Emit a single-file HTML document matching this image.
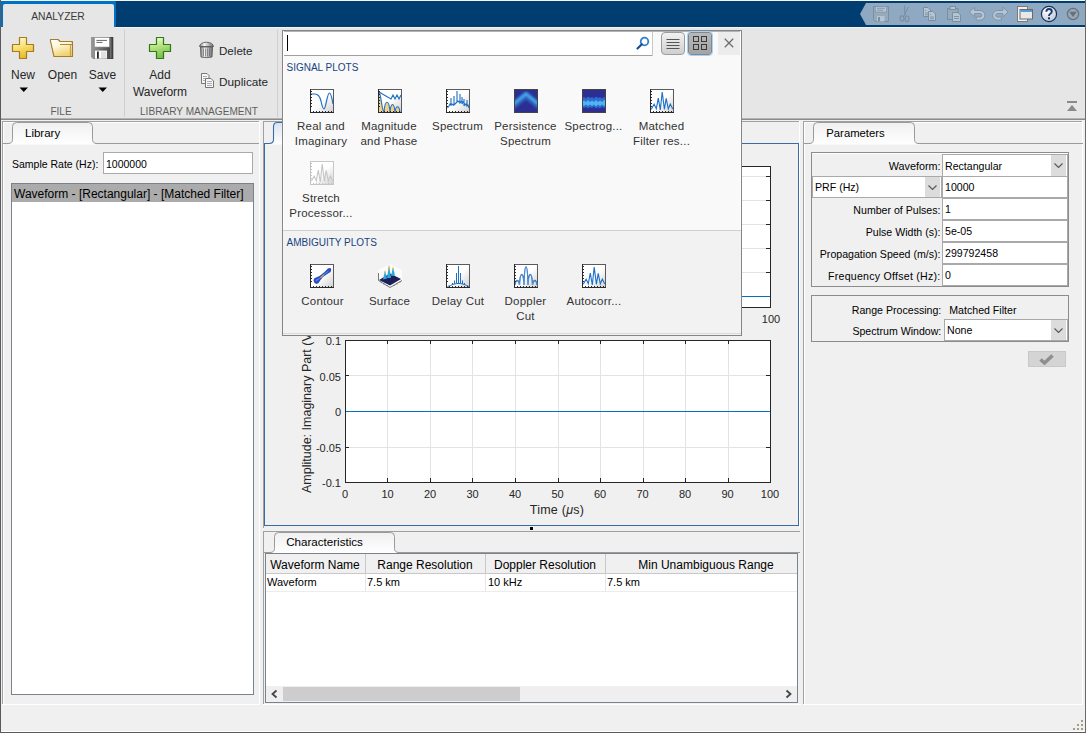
<!DOCTYPE html><html><head><meta charset="utf-8"><style>
html,body{margin:0;padding:0;width:1086px;height:733px;overflow:hidden;background:#f0f0f0;position:relative;font-family:"Liberation Sans", sans-serif}
.t{position:absolute;white-space:nowrap;line-height:1}
svg{overflow:visible}
</style></head><body>
<div style="position:absolute;left:0px;top:0px;width:1086px;height:1px;background:#f4f4f4"></div>
<div style="position:absolute;left:1px;top:1px;width:1085px;height:26px;background:#003e72"></div>
<div style="position:absolute;left:1px;top:1px;width:115px;height:26px;background:#0072c6"></div>
<div style="position:absolute;left:3px;top:4px;width:111px;height:23px;background:#e6e6e6;border-radius:2px 2px 0 0"></div>
<div class="t" style="left:-142px;width:400px;text-align:center;top:12.28px;font-size:10.3px;color:#3a3a3a;">ANALYZER</div>
<svg style="position:absolute;left:860px;top:3px" width="226" height="22" viewBox="0 0 226 22"><path d="M0 11 L6 0 H226 V22 H6 Z" fill="#8fa9c2"/></svg>
<div style="position:absolute;left:1px;top:27px;width:1084px;height:91px;background:#e6e6e6"></div>
<div style="position:absolute;left:0px;top:118px;width:1086px;height:1px;background:#b4b4b4"></div>
<div style="position:absolute;left:0px;top:119px;width:1086px;height:1px;background:#8a8a8a"></div>
<div style="position:absolute;left:124px;top:30px;width:1px;height:87px;background:#cfcfcf"></div>
<div style="position:absolute;left:277px;top:30px;width:1px;height:87px;background:#cfcfcf"></div>
<div class="t" style="left:-177px;width:400px;text-align:center;top:69.44px;font-size:12px;color:#262626;">New</div>
<div class="t" style="left:-137.5px;width:400px;text-align:center;top:69.44px;font-size:12px;color:#262626;">Open</div>
<div class="t" style="left:-97.5px;width:400px;text-align:center;top:69.44px;font-size:12px;color:#262626;">Save</div>
<div class="t" style="left:-139px;width:400px;text-align:center;top:107.03px;font-size:10px;color:#5e5e5e;">FILE</div>
<div class="t" style="left:-40px;width:400px;text-align:center;top:69.44px;font-size:12px;color:#262626;">Add</div>
<div class="t" style="left:-40px;width:400px;text-align:center;top:85.64px;font-size:12px;color:#262626;">Waveform</div>
<div class="t" style="left:219px;top:44.88px;font-size:11.6px;color:#262626;">Delete</div>
<div class="t" style="left:219px;top:77.01px;font-size:11.8px;color:#262626;">Duplicate</div>
<div class="t" style="left:-1px;width:400px;text-align:center;top:106.95px;font-size:10.1px;color:#5e5e5e;">LIBRARY MANAGEMENT</div>
<svg style="position:absolute;left:19px;top:87px" width="10" height="6" viewBox="0 0 10 6"><path d="M0.5 0.5 H9 L4.75 5 Z" fill="#000"/></svg>
<svg style="position:absolute;left:98px;top:87px" width="10" height="6" viewBox="0 0 10 6"><path d="M0.5 0.5 H9 L4.75 5 Z" fill="#000"/></svg>
<div style="position:absolute;left:1067px;top:101px;width:10px;height:2px;background:#8a8a8a"></div>
<svg style="position:absolute;left:1067px;top:105px" width="10" height="6" viewBox="0 0 10 6"><path d="M0 6 L5 0 L10 6 Z" fill="#8a8a8a"/></svg>
<div style="position:absolute;left:1px;top:120px;width:1084px;height:612px;background:#f0f0f0"></div>
<div style="position:absolute;left:0px;top:0px;width:1px;height:733px;background:#5a5a5a"></div>
<div style="position:absolute;left:1085px;top:0px;width:1px;height:733px;background:#6a6a6a"></div>
<div style="position:absolute;left:0px;top:732px;width:1086px;height:1px;background:#5a5a5a"></div>
<div style="position:absolute;left:2px;top:121px;width:257px;height:1px;background:#a0a0a0"></div>
<div style="position:absolute;left:2px;top:121px;width:1px;height:583px;background:#a0a0a0"></div>
<div style="position:absolute;left:3px;top:122px;width:256px;height:1px;background:#ffffff"></div>
<div style="position:absolute;left:3px;top:122px;width:1px;height:582px;background:#ffffff"></div>
<div style="position:absolute;left:2px;top:704px;width:258px;height:1px;background:#ffffff"></div>
<div style="position:absolute;left:259px;top:121px;width:1px;height:584px;background:#ffffff"></div>
<div style="position:absolute;left:3px;top:143px;width:256px;height:1px;background:#9a9a9a"></div>
<svg style="position:absolute;left:8px;top:122px" width="89" height="22" viewBox="0 0 89 22"><defs><linearGradient id="tl" x1="0" y1="0" x2="0" y2="1"><stop offset="0" stop-color="#f0f0f0"/><stop offset="1" stop-color="#ffffff"/></linearGradient></defs><path d="M0 21.5 Q4.5 21.5 4.5 17.5 V4.5 Q4.5 0.5 8.5 0.5 H80.5 Q84.5 0.5 84.5 4.5 V17.5 Q84.5 21.5 89 21.5 V22.5 H0 Z" fill="url(#tl)" stroke="none"/><path d="M0 21.5 Q4.5 21.5 4.5 17.5 V4.5 Q4.5 0.5 8.5 0.5 H80.5 Q84.5 0.5 84.5 4.5 V17.5 Q84.5 21.5 89 21.5" fill="none" stroke="#9a9a9a" stroke-width="1"/></svg>
<div class="t" style="left:25px;top:128.27px;font-size:11.5px;color:#000;">Library</div>
<div class="t" style="left:12px;top:159.11px;font-size:10.5px;color:#000;">Sample Rate (Hz):</div>
<div style="position:absolute;left:103px;top:152px;width:150px;height:22px;background:#fff;box-sizing:border-box;border:1px solid #a9a9a9"></div>
<div class="t" style="left:106px;top:159.11px;font-size:10.5px;color:#000;">1000000</div>
<div style="position:absolute;left:11px;top:183px;width:243px;height:512px;background:#fff;box-sizing:border-box;border:1px solid #7a828c"></div>
<div style="position:absolute;left:12px;top:184px;width:241px;height:18px;background:#ababab"></div>
<div class="t" style="left:14px;top:187.64px;font-size:12px;color:#000;">Waveform - [Rectangular] - [Matched Filter]</div>
<div style="position:absolute;left:263px;top:121px;width:537px;height:1px;background:#a0a0a0"></div>
<div style="position:absolute;left:263px;top:121px;width:1px;height:407px;background:#a0a0a0"></div>
<div style="position:absolute;left:799px;top:121px;width:1px;height:407px;background:#ffffff"></div>
<div style="position:absolute;left:264px;top:143px;width:535px;height:383px;box-sizing:border-box;border:1px solid #3a6ba5"></div>
<svg style="position:absolute;left:269px;top:122px" width="116" height="22" viewBox="0 0 116 22"><defs><linearGradient id="tc" x1="0" y1="0" x2="0" y2="1"><stop offset="0" stop-color="#d9e3ee"/><stop offset="1" stop-color="#ffffff"/></linearGradient></defs><path d="M0 21.5 Q4.5 21.5 4.5 17.5 V4.5 Q4.5 0.5 8.5 0.5 H107.5 Q111.5 0.5 111.5 4.5 V17.5 Q111.5 21.5 116 21.5 V22.5 H0 Z" fill="url(#tc)" stroke="none"/><path d="M0 21.5 Q4.5 21.5 4.5 17.5 V4.5 Q4.5 0.5 8.5 0.5 H107.5 Q111.5 0.5 111.5 4.5 V17.5 Q111.5 21.5 116 21.5" fill="none" stroke="#3a6ba5" stroke-width="1.1"/></svg>
<div style="position:absolute;left:345px;top:166px;width:426px;height:142px;background:#fff"></div>
<svg style="position:absolute;left:345px;top:166px" width="426" height="142" viewBox="0 0 426 142"><line x1="42.5" y1="0" x2="42.5" y2="141" stroke="#e3e3e3" stroke-width="1"/><line x1="42.5" y1="141" x2="42.5" y2="137" stroke="#262626" stroke-width="1"/><line x1="42.5" y1="0" x2="42.5" y2="4" stroke="#262626" stroke-width="1"/><line x1="85.5" y1="0" x2="85.5" y2="141" stroke="#e3e3e3" stroke-width="1"/><line x1="85.5" y1="141" x2="85.5" y2="137" stroke="#262626" stroke-width="1"/><line x1="85.5" y1="0" x2="85.5" y2="4" stroke="#262626" stroke-width="1"/><line x1="127.5" y1="0" x2="127.5" y2="141" stroke="#e3e3e3" stroke-width="1"/><line x1="127.5" y1="141" x2="127.5" y2="137" stroke="#262626" stroke-width="1"/><line x1="127.5" y1="0" x2="127.5" y2="4" stroke="#262626" stroke-width="1"/><line x1="170.5" y1="0" x2="170.5" y2="141" stroke="#e3e3e3" stroke-width="1"/><line x1="170.5" y1="141" x2="170.5" y2="137" stroke="#262626" stroke-width="1"/><line x1="170.5" y1="0" x2="170.5" y2="4" stroke="#262626" stroke-width="1"/><line x1="213.5" y1="0" x2="213.5" y2="141" stroke="#e3e3e3" stroke-width="1"/><line x1="213.5" y1="141" x2="213.5" y2="137" stroke="#262626" stroke-width="1"/><line x1="213.5" y1="0" x2="213.5" y2="4" stroke="#262626" stroke-width="1"/><line x1="255.5" y1="0" x2="255.5" y2="141" stroke="#e3e3e3" stroke-width="1"/><line x1="255.5" y1="141" x2="255.5" y2="137" stroke="#262626" stroke-width="1"/><line x1="255.5" y1="0" x2="255.5" y2="4" stroke="#262626" stroke-width="1"/><line x1="298.5" y1="0" x2="298.5" y2="141" stroke="#e3e3e3" stroke-width="1"/><line x1="298.5" y1="141" x2="298.5" y2="137" stroke="#262626" stroke-width="1"/><line x1="298.5" y1="0" x2="298.5" y2="4" stroke="#262626" stroke-width="1"/><line x1="340.5" y1="0" x2="340.5" y2="141" stroke="#e3e3e3" stroke-width="1"/><line x1="340.5" y1="141" x2="340.5" y2="137" stroke="#262626" stroke-width="1"/><line x1="340.5" y1="0" x2="340.5" y2="4" stroke="#262626" stroke-width="1"/><line x1="383.5" y1="0" x2="383.5" y2="141" stroke="#e3e3e3" stroke-width="1"/><line x1="383.5" y1="141" x2="383.5" y2="137" stroke="#262626" stroke-width="1"/><line x1="383.5" y1="0" x2="383.5" y2="4" stroke="#262626" stroke-width="1"/><line x1="0" y1="10.5" x2="425" y2="10.5" stroke="#e3e3e3" stroke-width="1"/><line x1="0" y1="10.5" x2="4" y2="10.5" stroke="#262626" stroke-width="1"/><line x1="425" y1="10.5" x2="421" y2="10.5" stroke="#262626" stroke-width="1"/><line x1="0" y1="34.5" x2="425" y2="34.5" stroke="#e3e3e3" stroke-width="1"/><line x1="0" y1="34.5" x2="4" y2="34.5" stroke="#262626" stroke-width="1"/><line x1="425" y1="34.5" x2="421" y2="34.5" stroke="#262626" stroke-width="1"/><line x1="0" y1="58.5" x2="425" y2="58.5" stroke="#e3e3e3" stroke-width="1"/><line x1="0" y1="58.5" x2="4" y2="58.5" stroke="#262626" stroke-width="1"/><line x1="425" y1="58.5" x2="421" y2="58.5" stroke="#262626" stroke-width="1"/><line x1="0" y1="82.5" x2="425" y2="82.5" stroke="#e3e3e3" stroke-width="1"/><line x1="0" y1="82.5" x2="4" y2="82.5" stroke="#262626" stroke-width="1"/><line x1="425" y1="82.5" x2="421" y2="82.5" stroke="#262626" stroke-width="1"/><line x1="0" y1="106.5" x2="425" y2="106.5" stroke="#e3e3e3" stroke-width="1"/><line x1="0" y1="106.5" x2="4" y2="106.5" stroke="#262626" stroke-width="1"/><line x1="425" y1="106.5" x2="421" y2="106.5" stroke="#262626" stroke-width="1"/><line x1="0" y1="130.5" x2="425" y2="130.5" stroke="#e3e3e3" stroke-width="1"/><line x1="0" y1="130.5" x2="4" y2="130.5" stroke="#262626" stroke-width="1"/><line x1="425" y1="130.5" x2="421" y2="130.5" stroke="#262626" stroke-width="1"/><line x1="0" y1="130.5" x2="425" y2="130.5" stroke="#0072bd" stroke-width="1.2"/><rect x="0.5" y="0.5" width="425" height="141" fill="none" stroke="#262626" stroke-width="1"/></svg>
<div class="t" style="left:571px;width:400px;text-align:center;top:313.89px;font-size:11px;color:#262626;">100</div>
<div style="position:absolute;left:345px;top:340px;width:426px;height:143px;background:#fff"></div>
<svg style="position:absolute;left:345px;top:340px" width="426" height="143" viewBox="0 0 426 143"><line x1="42.5" y1="0" x2="42.5" y2="142" stroke="#e3e3e3" stroke-width="1"/><line x1="42.5" y1="142" x2="42.5" y2="138" stroke="#262626" stroke-width="1"/><line x1="42.5" y1="0" x2="42.5" y2="4" stroke="#262626" stroke-width="1"/><line x1="85.5" y1="0" x2="85.5" y2="142" stroke="#e3e3e3" stroke-width="1"/><line x1="85.5" y1="142" x2="85.5" y2="138" stroke="#262626" stroke-width="1"/><line x1="85.5" y1="0" x2="85.5" y2="4" stroke="#262626" stroke-width="1"/><line x1="127.5" y1="0" x2="127.5" y2="142" stroke="#e3e3e3" stroke-width="1"/><line x1="127.5" y1="142" x2="127.5" y2="138" stroke="#262626" stroke-width="1"/><line x1="127.5" y1="0" x2="127.5" y2="4" stroke="#262626" stroke-width="1"/><line x1="170.5" y1="0" x2="170.5" y2="142" stroke="#e3e3e3" stroke-width="1"/><line x1="170.5" y1="142" x2="170.5" y2="138" stroke="#262626" stroke-width="1"/><line x1="170.5" y1="0" x2="170.5" y2="4" stroke="#262626" stroke-width="1"/><line x1="213.5" y1="0" x2="213.5" y2="142" stroke="#e3e3e3" stroke-width="1"/><line x1="213.5" y1="142" x2="213.5" y2="138" stroke="#262626" stroke-width="1"/><line x1="213.5" y1="0" x2="213.5" y2="4" stroke="#262626" stroke-width="1"/><line x1="255.5" y1="0" x2="255.5" y2="142" stroke="#e3e3e3" stroke-width="1"/><line x1="255.5" y1="142" x2="255.5" y2="138" stroke="#262626" stroke-width="1"/><line x1="255.5" y1="0" x2="255.5" y2="4" stroke="#262626" stroke-width="1"/><line x1="298.5" y1="0" x2="298.5" y2="142" stroke="#e3e3e3" stroke-width="1"/><line x1="298.5" y1="142" x2="298.5" y2="138" stroke="#262626" stroke-width="1"/><line x1="298.5" y1="0" x2="298.5" y2="4" stroke="#262626" stroke-width="1"/><line x1="340.5" y1="0" x2="340.5" y2="142" stroke="#e3e3e3" stroke-width="1"/><line x1="340.5" y1="142" x2="340.5" y2="138" stroke="#262626" stroke-width="1"/><line x1="340.5" y1="0" x2="340.5" y2="4" stroke="#262626" stroke-width="1"/><line x1="383.5" y1="0" x2="383.5" y2="142" stroke="#e3e3e3" stroke-width="1"/><line x1="383.5" y1="142" x2="383.5" y2="138" stroke="#262626" stroke-width="1"/><line x1="383.5" y1="0" x2="383.5" y2="4" stroke="#262626" stroke-width="1"/><line x1="0" y1="35.5" x2="425" y2="35.5" stroke="#e3e3e3" stroke-width="1"/><line x1="0" y1="35.5" x2="4" y2="35.5" stroke="#262626" stroke-width="1"/><line x1="425" y1="35.5" x2="421" y2="35.5" stroke="#262626" stroke-width="1"/><line x1="0" y1="71.5" x2="425" y2="71.5" stroke="#e3e3e3" stroke-width="1"/><line x1="0" y1="71.5" x2="4" y2="71.5" stroke="#262626" stroke-width="1"/><line x1="425" y1="71.5" x2="421" y2="71.5" stroke="#262626" stroke-width="1"/><line x1="0" y1="107.5" x2="425" y2="107.5" stroke="#e3e3e3" stroke-width="1"/><line x1="0" y1="107.5" x2="4" y2="107.5" stroke="#262626" stroke-width="1"/><line x1="425" y1="107.5" x2="421" y2="107.5" stroke="#262626" stroke-width="1"/><line x1="0" y1="71.5" x2="425" y2="71.5" stroke="#0072bd" stroke-width="1.2"/><rect x="0.5" y="0.5" width="425" height="142" fill="none" stroke="#262626" stroke-width="1"/></svg>
<div class="t" style="right:745px;top:335.69px;font-size:11px;color:#262626;">0.1</div>
<div class="t" style="right:745px;top:371.89px;font-size:11px;color:#262626;">0.05</div>
<div class="t" style="right:745px;top:406.69px;font-size:11px;color:#262626;">0</div>
<div class="t" style="right:745px;top:442.99px;font-size:11px;color:#262626;">-0.05</div>
<div class="t" style="right:745px;top:478.19px;font-size:11px;color:#262626;">-0.1</div>
<div class="t" style="left:145.0px;width:400px;text-align:center;top:488.69px;font-size:11px;color:#262626;">0</div>
<div class="t" style="left:187.5px;width:400px;text-align:center;top:488.69px;font-size:11px;color:#262626;">10</div>
<div class="t" style="left:230.0px;width:400px;text-align:center;top:488.69px;font-size:11px;color:#262626;">20</div>
<div class="t" style="left:272.5px;width:400px;text-align:center;top:488.69px;font-size:11px;color:#262626;">30</div>
<div class="t" style="left:315.0px;width:400px;text-align:center;top:488.69px;font-size:11px;color:#262626;">40</div>
<div class="t" style="left:357.5px;width:400px;text-align:center;top:488.69px;font-size:11px;color:#262626;">50</div>
<div class="t" style="left:400.0px;width:400px;text-align:center;top:488.69px;font-size:11px;color:#262626;">60</div>
<div class="t" style="left:442.5px;width:400px;text-align:center;top:488.69px;font-size:11px;color:#262626;">70</div>
<div class="t" style="left:485.0px;width:400px;text-align:center;top:488.69px;font-size:11px;color:#262626;">80</div>
<div class="t" style="left:527.5px;width:400px;text-align:center;top:488.69px;font-size:11px;color:#262626;">90</div>
<div class="t" style="left:570.0px;width:400px;text-align:center;top:488.69px;font-size:11px;color:#262626;">100</div>
<div class="t" style="left:357px;width:400px;text-align:center;top:503.92px;font-size:12.5px;color:#262626;letter-spacing:0.25px;">Time (<i>&mu;</i>s)</div>
<div class="t" style="left:306.8px;top:410.5px;font-size:12.5px;color:#262626;transform:translate(-50%,-50%) rotate(-90deg)">Amplitude: Imaginary Part (V)</div>
<div style="position:absolute;left:530px;top:527px;width:3px;height:3px;background:#000"></div>
<div style="position:absolute;left:263px;top:531px;width:537px;height:1px;background:#a0a0a0"></div>
<div style="position:absolute;left:263px;top:531px;width:1px;height:174px;background:#a0a0a0"></div>
<div style="position:absolute;left:263px;top:704px;width:538px;height:1px;background:#ffffff"></div>
<div style="position:absolute;left:264px;top:552px;width:536px;height:1px;background:#9a9a9a"></div>
<svg style="position:absolute;left:270px;top:532px" width="129" height="21" viewBox="0 0 129 21"><defs><linearGradient id="tch" x1="0" y1="0" x2="0" y2="1"><stop offset="0" stop-color="#f0f0f0"/><stop offset="1" stop-color="#ffffff"/></linearGradient></defs><path d="M0 20.5 Q4.5 20.5 4.5 16.5 V4.5 Q4.5 0.5 8.5 0.5 H120.5 Q124.5 0.5 124.5 4.5 V16.5 Q124.5 20.5 129 20.5 V21.5 H0 Z" fill="url(#tch)" stroke="none"/><path d="M0 20.5 Q4.5 20.5 4.5 16.5 V4.5 Q4.5 0.5 8.5 0.5 H120.5 Q124.5 0.5 124.5 4.5 V16.5 Q124.5 20.5 129 20.5" fill="none" stroke="#9a9a9a" stroke-width="1"/></svg>
<div class="t" style="left:124.5px;width:400px;text-align:center;top:536.18px;font-size:11.6px;color:#000;">Characteristics</div>
<div style="position:absolute;left:265px;top:553px;width:533px;height:150px;background:#fff;box-sizing:border-box;border:1px solid #7a828c"></div>
<div style="position:absolute;left:266px;top:554px;width:531px;height:19px;background:#f0f0f0"></div>
<div style="position:absolute;left:266px;top:573px;width:531px;height:1px;background:#c8c8c8"></div>
<div style="position:absolute;left:365px;top:554px;width:1px;height:19px;background:#c8c8c8"></div>
<div style="position:absolute;left:365px;top:574px;width:1px;height:17px;background:#e6e6e6"></div>
<div style="position:absolute;left:485px;top:554px;width:1px;height:19px;background:#c8c8c8"></div>
<div style="position:absolute;left:485px;top:574px;width:1px;height:17px;background:#e6e6e6"></div>
<div style="position:absolute;left:605px;top:554px;width:1px;height:19px;background:#c8c8c8"></div>
<div style="position:absolute;left:605px;top:574px;width:1px;height:17px;background:#e6e6e6"></div>
<div style="position:absolute;left:266px;top:591px;width:531px;height:1px;background:#ececec"></div>
<div class="t" style="left:115px;width:400px;text-align:center;top:559.34px;font-size:12px;color:#000;">Waveform Name</div>
<div class="t" style="left:225px;width:400px;text-align:center;top:559.34px;font-size:12px;color:#000;">Range Resolution</div>
<div class="t" style="left:345px;width:400px;text-align:center;top:559.34px;font-size:12px;color:#000;">Doppler Resolution</div>
<div class="t" style="left:506px;width:400px;text-align:center;top:559.34px;font-size:12px;color:#000;">Min Unambiguous Range</div>
<div class="t" style="left:267px;top:576.69px;font-size:11px;color:#000;">Waveform</div>
<div class="t" style="left:367px;top:576.69px;font-size:11px;color:#000;">7.5 km</div>
<div class="t" style="left:488px;top:576.69px;font-size:11px;color:#000;">10 kHz</div>
<div class="t" style="left:607px;top:576.69px;font-size:11px;color:#000;">7.5 km</div>
<div style="position:absolute;left:266px;top:686px;width:531px;height:16px;background:#efefef"></div>
<div style="position:absolute;left:283px;top:687px;width:237px;height:14px;background:#cdcdcd"></div>
<svg style="position:absolute;left:271px;top:690px" width="7" height="8" viewBox="0 0 7 8"><path d="M5.5 0.5 L1.5 4 L5.5 7.5" fill="none" stroke="#444" stroke-width="1.8"/></svg>
<svg style="position:absolute;left:785px;top:690px" width="7" height="8" viewBox="0 0 7 8"><path d="M1.5 0.5 L5.5 4 L1.5 7.5" fill="none" stroke="#444" stroke-width="1.8"/></svg>
<div style="position:absolute;left:803px;top:121px;width:279px;height:1px;background:#a0a0a0"></div>
<div style="position:absolute;left:803px;top:121px;width:1px;height:583px;background:#a0a0a0"></div>
<div style="position:absolute;left:804px;top:122px;width:278px;height:1px;background:#ffffff"></div>
<div style="position:absolute;left:804px;top:122px;width:1px;height:582px;background:#ffffff"></div>
<div style="position:absolute;left:803px;top:704px;width:280px;height:1px;background:#ffffff"></div>
<div style="position:absolute;left:1082px;top:121px;width:1px;height:584px;background:#ffffff"></div>
<div style="position:absolute;left:804px;top:143px;width:279px;height:1px;background:#9a9a9a"></div>
<svg style="position:absolute;left:809px;top:122px" width="110" height="22" viewBox="0 0 110 22"><defs><linearGradient id="tp" x1="0" y1="0" x2="0" y2="1"><stop offset="0" stop-color="#f0f0f0"/><stop offset="1" stop-color="#ffffff"/></linearGradient></defs><path d="M0 21.5 Q4.5 21.5 4.5 17.5 V4.5 Q4.5 0.5 8.5 0.5 H101.5 Q105.5 0.5 105.5 4.5 V17.5 Q105.5 21.5 110 21.5 V22.5 H0 Z" fill="url(#tp)" stroke="none"/><path d="M0 21.5 Q4.5 21.5 4.5 17.5 V4.5 Q4.5 0.5 8.5 0.5 H101.5 Q105.5 0.5 105.5 4.5 V17.5 Q105.5 21.5 110 21.5" fill="none" stroke="#9a9a9a" stroke-width="1"/></svg>
<div class="t" style="left:655.5px;width:400px;text-align:center;top:128.43px;font-size:11.3px;color:#000;">Parameters</div>
<div style="position:absolute;left:811px;top:152px;width:258px;height:135px;box-sizing:border-box;border:1px solid #8c8c8c"></div>
<div style="position:absolute;left:812px;top:153px;width:256px;height:1px;background:#ffffff"></div>
<div style="position:absolute;left:942px;top:154px;width:126px;height:23px;background:#fff;box-sizing:border-box;border:1px solid #a9a9a9"></div>
<div style="position:absolute;left:1051px;top:155px;width:15px;height:21px;background:#dcdcdc"></div>
<svg style="position:absolute;left:1054px;top:163.0px" width="10" height="6" viewBox="0 0 10 6"><path d="M0.5 0.5 L4.5 4.5 L8.5 0.5" fill="none" stroke="#555" stroke-width="1.1"/></svg>
<div class="t" style="left:945px;top:160.93px;font-size:10.6px;color:#000;">Rectangular</div>
<div style="position:absolute;left:812px;top:176px;width:130px;height:22px;background:#fff;box-sizing:border-box;border:1px solid #a9a9a9"></div>
<div style="position:absolute;left:925px;top:177px;width:15px;height:20px;background:#dcdcdc"></div>
<svg style="position:absolute;left:928px;top:184.5px" width="10" height="6" viewBox="0 0 10 6"><path d="M0.5 0.5 L4.5 4.5 L8.5 0.5" fill="none" stroke="#555" stroke-width="1.1"/></svg>
<div class="t" style="left:815px;top:181.93px;font-size:10.6px;color:#000;">PRF (Hz)</div>
<div style="position:absolute;left:942px;top:176px;width:126px;height:22px;background:#fff;box-sizing:border-box;border:1px solid #a9a9a9"></div>
<div class="t" style="left:945px;top:181.93px;font-size:10.6px;color:#000;">10000</div>
<div style="position:absolute;left:942px;top:198px;width:126px;height:22px;background:#fff;box-sizing:border-box;border:1px solid #a9a9a9"></div>
<div class="t" style="left:945px;top:203.93px;font-size:10.6px;color:#000;">1</div>
<div style="position:absolute;left:942px;top:220px;width:126px;height:22px;background:#fff;box-sizing:border-box;border:1px solid #a9a9a9"></div>
<div class="t" style="left:945px;top:225.93px;font-size:10.6px;color:#000;">5e-05</div>
<div style="position:absolute;left:942px;top:242px;width:126px;height:22px;background:#fff;box-sizing:border-box;border:1px solid #a9a9a9"></div>
<div class="t" style="left:945px;top:247.93px;font-size:10.6px;color:#000;">299792458</div>
<div style="position:absolute;left:942px;top:264px;width:126px;height:22px;background:#fff;box-sizing:border-box;border:1px solid #a9a9a9"></div>
<div class="t" style="left:945px;top:269.93px;font-size:10.6px;color:#000;">0</div>
<div class="t" style="right:145.5px;top:161.36px;font-size:10.8px;color:#000;">Waveform:</div>
<div class="t" style="right:145.5px;top:204.63px;font-size:10.6px;color:#000;">Number of Pulses:</div>
<div class="t" style="right:145.5px;top:226.53px;font-size:10.6px;color:#000;">Pulse Width (s):</div>
<div class="t" style="right:145.5px;top:248.53px;font-size:10.6px;color:#000;">Propagation Speed (m/s):</div>
<div class="t" style="right:145.5px;top:270.53px;font-size:10.6px;color:#000;letter-spacing:0.25px;">Frequency Offset (Hz):</div>
<div style="position:absolute;left:811px;top:295px;width:258px;height:47px;box-sizing:border-box;border:1px solid #8c8c8c"></div>
<div class="t" style="right:144.70000000000005px;top:305.03px;font-size:10.6px;color:#000;">Range Processing:</div>
<div class="t" style="left:949.3px;top:305.03px;font-size:10.6px;color:#000;">Matched Filter</div>
<div class="t" style="right:144.70000000000005px;top:326.23px;font-size:10.6px;color:#000;">Spectrum Window:</div>
<div style="position:absolute;left:944px;top:319px;width:124px;height:22px;background:#fff;box-sizing:border-box;border:1px solid #a9a9a9"></div>
<div style="position:absolute;left:1051px;top:320px;width:15px;height:20px;background:#dcdcdc"></div>
<svg style="position:absolute;left:1054px;top:327.5px" width="10" height="6" viewBox="0 0 10 6"><path d="M0.5 0.5 L4.5 4.5 L8.5 0.5" fill="none" stroke="#555" stroke-width="1.1"/></svg>
<div class="t" style="left:947px;top:324.93px;font-size:10.6px;color:#000;">None</div>
<div style="position:absolute;left:1028px;top:351px;width:38px;height:16px;background:#d4d4d4;box-sizing:border-box;border:1px solid #c8c8c8"></div>
<svg style="position:absolute;left:1038px;top:353px" width="18" height="12" viewBox="0 0 18 12"><path d="M2.5 6.5 L6.5 10 L14.5 2.5" fill="none" stroke="#8e8e8e" stroke-width="3.6" stroke-linejoin="round"/></svg>
<div style="position:absolute;left:282px;top:30px;width:460px;height:306px;background:#f9f9f9"></div>
<div style="position:absolute;left:282px;top:30px;width:460px;height:1px;background:#858585"></div>
<div style="position:absolute;left:282px;top:30px;width:1px;height:306px;background:#858585"></div>
<div style="position:absolute;left:282px;top:335px;width:460px;height:1px;background:#858585"></div>
<div style="position:absolute;left:741px;top:30px;width:1px;height:306px;background:#858585"></div>
<div style="position:absolute;left:283px;top:31px;width:458px;height:1px;background:#b4b4b4"></div>
<div style="position:absolute;left:283px;top:31px;width:1px;height:304px;background:#ffffff"></div>
<div style="position:absolute;left:740px;top:31px;width:1px;height:304px;background:#ffffff"></div>
<div style="position:absolute;left:284px;top:32px;width:368px;height:23px;background:#fff"></div>
<div style="position:absolute;left:284px;top:55px;width:369px;height:1px;background:#a0a0a0"></div>
<div style="position:absolute;left:652px;top:32px;width:1px;height:24px;background:#c8c8c8"></div>
<div style="position:absolute;left:287px;top:35px;width:1px;height:16px;background:#000"></div>
<svg style="position:absolute;left:636px;top:36px" width="14" height="14" viewBox="0 0 14 14"><circle cx="8.5" cy="5.5" r="3.8" fill="none" stroke="#2f7fd0" stroke-width="1.8"/><path d="M5.8 8.2 L1.5 12.5" stroke="#1b4f9a" stroke-width="2.2" stroke-linecap="round"/></svg>
<div style="position:absolute;left:661px;top:32px;width:24px;height:23px;box-sizing:border-box;border:1px solid #9d9d9d;border-radius:4px;background:linear-gradient(#f2f2f2,#cfcfcf)"></div>
<svg style="position:absolute;left:665px;top:36px" width="16" height="16" viewBox="0 0 16 16"><line x1="1.5" y1="3.5" x2="14.5" y2="3.5" stroke="#555" stroke-width="1"/><line x1="1.5" y1="6.5" x2="14.5" y2="6.5" stroke="#555" stroke-width="1"/><line x1="1.5" y1="9.5" x2="14.5" y2="9.5" stroke="#555" stroke-width="1"/><line x1="1.5" y1="12.5" x2="14.5" y2="12.5" stroke="#555" stroke-width="1"/></svg>
<div style="position:absolute;left:688px;top:32px;width:24px;height:23px;box-sizing:border-box;border:1px solid #7a8a9a;outline:1px solid #a9d0f5;border-radius:3px;background:linear-gradient(#b9b9b9,#a4a4a4)"></div>
<svg style="position:absolute;left:691px;top:35px" width="18" height="18" viewBox="0 0 18 18"><rect x="2.5" y="1.5" width="5" height="5" fill="none" stroke="#3a3a3a"/><rect x="10.5" y="1.5" width="5" height="5" fill="none" stroke="#3a3a3a"/><rect x="2.5" y="9.5" width="5" height="5" fill="none" stroke="#3a3a3a"/><rect x="10.5" y="9.5" width="5" height="5" fill="none" stroke="#3a3a3a"/></svg>
<div style="position:absolute;left:718px;top:32px;width:22px;height:23px;background:#ececec"></div>
<svg style="position:absolute;left:724px;top:38px" width="10" height="10" viewBox="0 0 10 10"><path d="M0.8 0.8 L9.2 9.2 M9.2 0.8 L0.8 9.2" stroke="#6e6e6e" stroke-width="1.3"/></svg>
<div class="t" style="left:286.5px;top:63.13px;font-size:10px;color:#17447e;">SIGNAL PLOTS</div>
<div style="position:absolute;left:283px;top:230px;width:458px;height:1px;background:#cfcfcf"></div>
<div style="position:absolute;left:283px;top:231px;width:458px;height:104px;background:#f2f2f2"></div>
<div style="position:absolute;left:283px;top:333px;width:458px;height:1px;background:#d9d9d9"></div>
<div class="t" style="left:286.5px;top:238.34px;font-size:10px;color:#17447e;">AMBIGUITY PLOTS</div>
<svg style="position:absolute;left:310px;top:89px" width="24" height="24" viewBox="0 0 24 24"><defs><linearGradient id="fi1" x1="0" y1="0" x2="1" y2="1"><stop offset="0.5" stop-color="#fff"/><stop offset="1" stop-color="#d0d0d0"/></linearGradient></defs><rect x="0.5" y="0.5" width="23" height="23" fill="url(#fi1)" stroke="#5a5a5a"/><path d="M1 5 H5 C8 5 10 8 11 12 C12 17 13 20 14 20 C16 20 17 4 19.5 4 C21 4 22 9 23 15" fill="none" stroke="#1f6fc5" stroke-width="1.2"/><path d="M0.5 0 V24 M0 23.5 H24" stroke="#2a2a2a" stroke-width="1"/><rect x="1" y="2" width="1" height="1" fill="#2a2a2a"/><rect x="1" y="5" width="1" height="1" fill="#2a2a2a"/><rect x="1" y="8" width="1" height="1" fill="#2a2a2a"/><rect x="1" y="11" width="1" height="1" fill="#2a2a2a"/><rect x="1" y="14" width="1" height="1" fill="#2a2a2a"/><rect x="1" y="17" width="1" height="1" fill="#2a2a2a"/><rect x="3" y="22" width="1" height="1" fill="#2a2a2a"/><rect x="6" y="22" width="1" height="1" fill="#2a2a2a"/><rect x="9" y="22" width="1" height="1" fill="#2a2a2a"/><rect x="12" y="22" width="1" height="1" fill="#2a2a2a"/><rect x="15" y="22" width="1" height="1" fill="#2a2a2a"/><rect x="18" y="22" width="1" height="1" fill="#2a2a2a"/><rect x="21" y="22" width="1" height="1" fill="#2a2a2a"/></svg>
<svg style="position:absolute;left:378px;top:89px" width="24" height="24" viewBox="0 0 24 24"><defs><linearGradient id="fi2" x1="0" y1="0" x2="1" y2="1"><stop offset="0.5" stop-color="#fff"/><stop offset="1" stop-color="#d0d0d0"/></linearGradient></defs><rect x="0.5" y="0.5" width="23" height="23" fill="url(#fi2)" stroke="#5a5a5a"/><path d="M1 3 C3 4 4 23 6 23 C7 10 11 10 12 23 C13 13 16 13 17 23 C18 16 21 16 22 23 L1 23 Z" fill="#f3cf88"/><path d="M1 3 C3 4 4 23 6 23 C7 10 11 10 12 23 C13 13 16 13 17 23 C18 16 21 16 22 23" fill="none" stroke="#1f6fc5" stroke-width="1.1"/><path d="M1 3 L13 10 L15 6 L17 10 L19 6 L21 10 L23 6" fill="none" stroke="#1f6fc5" stroke-width="1.1"/><path d="M0.5 0 V24 M0 23.5 H24" stroke="#2a2a2a" stroke-width="1"/><rect x="1" y="2" width="1" height="1" fill="#2a2a2a"/><rect x="1" y="5" width="1" height="1" fill="#2a2a2a"/><rect x="1" y="8" width="1" height="1" fill="#2a2a2a"/><rect x="1" y="11" width="1" height="1" fill="#2a2a2a"/><rect x="1" y="14" width="1" height="1" fill="#2a2a2a"/><rect x="1" y="17" width="1" height="1" fill="#2a2a2a"/><rect x="3" y="22" width="1" height="1" fill="#2a2a2a"/><rect x="6" y="22" width="1" height="1" fill="#2a2a2a"/><rect x="9" y="22" width="1" height="1" fill="#2a2a2a"/><rect x="12" y="22" width="1" height="1" fill="#2a2a2a"/><rect x="15" y="22" width="1" height="1" fill="#2a2a2a"/><rect x="18" y="22" width="1" height="1" fill="#2a2a2a"/><rect x="21" y="22" width="1" height="1" fill="#2a2a2a"/></svg>
<svg style="position:absolute;left:446px;top:89px" width="24" height="24" viewBox="0 0 24 24"><defs><linearGradient id="fi3" x1="0" y1="0" x2="1" y2="1"><stop offset="0.5" stop-color="#fff"/><stop offset="1" stop-color="#d0d0d0"/></linearGradient></defs><rect x="0.5" y="0.5" width="23" height="23" fill="url(#fi3)" stroke="#5a5a5a"/><path d="M1.5 19 L3 17 L4 15 L5 16 V9 V16 L6 15 L7 16 L8 15 V7 V16 L9 15 L10 14 L11 13 V2 V13 L12 12 L13 13 L14 12 V5 V14 L15 13 L16 12 V8 V15 L17 13 L18 14 V10 V17 L19 15 L20 16 L21 14 V11 V17 L22 16 L23 19" fill="none" stroke="#1f6fc5" stroke-width="1.1"/><path d="M0.5 0 V24 M0 23.5 H24" stroke="#2a2a2a" stroke-width="1"/><rect x="1" y="2" width="1" height="1" fill="#2a2a2a"/><rect x="1" y="5" width="1" height="1" fill="#2a2a2a"/><rect x="1" y="8" width="1" height="1" fill="#2a2a2a"/><rect x="1" y="11" width="1" height="1" fill="#2a2a2a"/><rect x="1" y="14" width="1" height="1" fill="#2a2a2a"/><rect x="1" y="17" width="1" height="1" fill="#2a2a2a"/><rect x="3" y="22" width="1" height="1" fill="#2a2a2a"/><rect x="6" y="22" width="1" height="1" fill="#2a2a2a"/><rect x="9" y="22" width="1" height="1" fill="#2a2a2a"/><rect x="12" y="22" width="1" height="1" fill="#2a2a2a"/><rect x="15" y="22" width="1" height="1" fill="#2a2a2a"/><rect x="18" y="22" width="1" height="1" fill="#2a2a2a"/><rect x="21" y="22" width="1" height="1" fill="#2a2a2a"/></svg>
<svg style="position:absolute;left:514px;top:89px" width="24" height="24" viewBox="0 0 24 24"><defs><filter id="bl1" x="-30%" y="-30%" width="160%" height="160%"><feGaussianBlur stdDeviation="0.8"/></filter><clipPath id="cp1"><rect x="1" y="1" width="22" height="22"/></clipPath></defs><rect x="0.5" y="0.5" width="23" height="23" fill="#2c2e92" stroke="#444"/><g clip-path="url(#cp1)"><path d="M-2 17.5 L12 6 L26 17.5" fill="none" stroke="#2f5fc0" stroke-width="7" filter="url(#bl1)"/><path d="M-2 16.5 L12 5 L26 16.5" fill="none" stroke="#46b0ec" stroke-width="2.6" filter="url(#bl1)"/></g></svg>
<svg style="position:absolute;left:582px;top:89px" width="24" height="24" viewBox="0 0 24 24"><defs><filter id="bl2" x="-20%" y="-50%" width="140%" height="200%"><feGaussianBlur stdDeviation="0.6"/></filter><clipPath id="cp2"><rect x="1" y="1" width="22" height="22"/></clipPath></defs><rect x="0.5" y="0.5" width="23" height="23" fill="#2c2e92" stroke="#444"/><g clip-path="url(#cp2)" filter="url(#bl2)"><path d="M0 9 L2 8 L4 9.5 L6 7.5 L8 9 L10 8 L12 9.5 L14 7.5 L16 9 L18 8 L20 9.5 L22 8 L24 9 V18 L22 19 L20 17.5 L18 19.5 L16 18 L14 19.5 L12 17.5 L10 19 L8 18 L6 19.5 L4 18 L2 19 L0 18 Z" fill="#2e6ad2"/><path d="M0 13 L2 11.5 L4 13 L6 11 L8 13 L10 11.5 L12 13 L14 11 L16 13 L18 11.5 L20 13 L22 11 L24 12.5 V16 L22 17 L20 15.5 L18 17 L16 15.5 L14 17.5 L12 15.5 L10 17 L8 15.5 L6 17 L4 15.5 L2 17 L0 16 Z" fill="#4db6ee"/></g></svg>
<svg style="position:absolute;left:650px;top:89px" width="24" height="24" viewBox="0 0 24 24"><defs><linearGradient id="fi4" x1="0" y1="0" x2="1" y2="1"><stop offset="0.5" stop-color="#fff"/><stop offset="1" stop-color="#d0d0d0"/></linearGradient></defs><rect x="0.5" y="0.5" width="23" height="23" fill="url(#fi4)" stroke="#5a5a5a"/><path d="M1.3 20.3 L4.1 15.1 L6.3 19.7 L8.3 9.2 L10.3 21 L12.2 3.1 L14.4 20.3 L16.2 9.4 L18.3 19.9 L20.3 15.1 L22.8 20" fill="none" stroke="#1f6fc5" stroke-width="1.1"/><path d="M0.5 0 V24 M0 23.5 H24" stroke="#2a2a2a" stroke-width="1"/><rect x="1" y="2" width="1" height="1" fill="#2a2a2a"/><rect x="1" y="5" width="1" height="1" fill="#2a2a2a"/><rect x="1" y="8" width="1" height="1" fill="#2a2a2a"/><rect x="1" y="11" width="1" height="1" fill="#2a2a2a"/><rect x="1" y="14" width="1" height="1" fill="#2a2a2a"/><rect x="1" y="17" width="1" height="1" fill="#2a2a2a"/><rect x="3" y="22" width="1" height="1" fill="#2a2a2a"/><rect x="6" y="22" width="1" height="1" fill="#2a2a2a"/><rect x="9" y="22" width="1" height="1" fill="#2a2a2a"/><rect x="12" y="22" width="1" height="1" fill="#2a2a2a"/><rect x="15" y="22" width="1" height="1" fill="#2a2a2a"/><rect x="18" y="22" width="1" height="1" fill="#2a2a2a"/><rect x="21" y="22" width="1" height="1" fill="#2a2a2a"/></svg>
<svg style="position:absolute;left:310px;top:161px" width="24" height="24" viewBox="0 0 24 24"><defs><linearGradient id="fi5" x1="0" y1="0" x2="1" y2="1"><stop offset="0.5" stop-color="#fff"/><stop offset="1" stop-color="#d0d0d0"/></linearGradient></defs><rect x="0.5" y="0.5" width="23" height="23" fill="url(#fi5)" stroke="#c8c8c8"/><path d="M1.3 20.3 L4.1 15.1 L6.3 19.7 L8.3 9.2 L10.3 21 L12.2 3.1 L14.4 20.3 L16.2 9.4 L18.3 19.9 L20.3 15.1 L22.8 20" fill="none" stroke="#c6c6c6" stroke-width="1.1"/><path d="M0.5 0 V24 M0 23.5 H24" stroke="#c4c4c4" stroke-width="1"/><rect x="1" y="2" width="1" height="1" fill="#c4c4c4"/><rect x="1" y="5" width="1" height="1" fill="#c4c4c4"/><rect x="1" y="8" width="1" height="1" fill="#c4c4c4"/><rect x="1" y="11" width="1" height="1" fill="#c4c4c4"/><rect x="1" y="14" width="1" height="1" fill="#c4c4c4"/><rect x="1" y="17" width="1" height="1" fill="#c4c4c4"/><rect x="3" y="22" width="1" height="1" fill="#c4c4c4"/><rect x="6" y="22" width="1" height="1" fill="#c4c4c4"/><rect x="9" y="22" width="1" height="1" fill="#c4c4c4"/><rect x="12" y="22" width="1" height="1" fill="#c4c4c4"/><rect x="15" y="22" width="1" height="1" fill="#c4c4c4"/><rect x="18" y="22" width="1" height="1" fill="#c4c4c4"/><rect x="21" y="22" width="1" height="1" fill="#c4c4c4"/></svg>
<svg style="position:absolute;left:310px;top:264px" width="24" height="24" viewBox="0 0 24 24"><defs><linearGradient id="fi6" x1="0" y1="0" x2="1" y2="1"><stop offset="0.5" stop-color="#fff"/><stop offset="1" stop-color="#d0d0d0"/></linearGradient></defs><rect x="0.5" y="0.5" width="23" height="23" fill="url(#fi6)" stroke="#5a5a5a"/><path d="M3.5 16.5 Q3.5 14 6 13.5 L9.5 12 L14 8.5 L16.5 6 Q18 3.5 20.5 4 Q22 5.5 20.5 8 L18 9.5 L13 13 L10.5 16 Q9 19.5 6.5 20 Q4 19.5 3.5 16.5 Z" fill="#3446c0"/><path d="M5.5 16 L10 13.5 L14.5 9.5 L19 6 L18 8 L13.5 11.5 L9.5 15 L6 17.5 Z" fill="#2fa0d8"/><path d="M10 13.5 L13.5 10.5 L14.5 11 L11 14 Z" fill="#e8b030"/><path d="M0.5 0 V24 M0 23.5 H24" stroke="#2a2a2a" stroke-width="1"/><rect x="1" y="2" width="1" height="1" fill="#2a2a2a"/><rect x="1" y="5" width="1" height="1" fill="#2a2a2a"/><rect x="1" y="8" width="1" height="1" fill="#2a2a2a"/><rect x="1" y="11" width="1" height="1" fill="#2a2a2a"/><rect x="1" y="14" width="1" height="1" fill="#2a2a2a"/><rect x="1" y="17" width="1" height="1" fill="#2a2a2a"/><rect x="3" y="22" width="1" height="1" fill="#2a2a2a"/><rect x="6" y="22" width="1" height="1" fill="#2a2a2a"/><rect x="9" y="22" width="1" height="1" fill="#2a2a2a"/><rect x="12" y="22" width="1" height="1" fill="#2a2a2a"/><rect x="15" y="22" width="1" height="1" fill="#2a2a2a"/><rect x="18" y="22" width="1" height="1" fill="#2a2a2a"/><rect x="21" y="22" width="1" height="1" fill="#2a2a2a"/></svg>
<svg style="position:absolute;left:377px;top:263px" width="26" height="26" viewBox="0 0 26 26"><path d="M13 1 L25 7 V17 L13 24 L1 17 V7 Z" fill="#ffffff" opacity="0.7"/><path d="M2 17 L13 10.5 L24 16 L13 22.5 Z" fill="#1c1f5a"/><path d="M1.5 10 V17.5 L13 24.5 L25 17.5" fill="none" stroke="#555" stroke-width="0.8"/><path d="M4 18.5 V19.5 M7 20.5 V21.5 M10 22 V23 M17 22 V23 M20 20.5 V21.5 M23 18.5 V19.5" stroke="#444" stroke-width="0.7"/><path d="M6 16.5 L8 7.5 L10 15.5 Z" fill="#2fa8e0"/><path d="M10 15 L12 2 L14 15 Z" fill="#2fa8e0"/><path d="M14 13 L16 4 L18 12.5 Z" fill="#2fa8e0"/><path d="M11.3 7 L12 1.5 L12.7 7 Z" fill="#f5a300"/><path d="M7.4 10 L8 7 L8.6 10 Z" fill="#f5a300"/><path d="M15.5 7 L16 3.5 L16.5 7 Z" fill="#f5a300"/></svg>
<svg style="position:absolute;left:446px;top:264px" width="24" height="24" viewBox="0 0 24 24"><defs><linearGradient id="fi7" x1="0" y1="0" x2="1" y2="1"><stop offset="0.5" stop-color="#fff"/><stop offset="1" stop-color="#d0d0d0"/></linearGradient></defs><rect x="0.5" y="0.5" width="23" height="23" fill="url(#fi7)" stroke="#5a5a5a"/><path d="M12.5 2 V19.5 M10.5 9 V19.5 M14.5 9 V19.5 M8.5 16.5 V20 M16.5 16.5 V20 M6.5 19 V21 M18.5 19 V21" fill="none" stroke="#1f6fc5" stroke-width="1"/><path d="M1.5 22.5 L4.5 21.5 L6.5 20.5 L8.5 20 L10.5 19.5 H14.5 L16.5 20 L18.5 20.5 L20.5 21.5 L23 22.5" fill="none" stroke="#1f6fc5" stroke-width="1"/><path d="M0.5 0 V24 M0 23.5 H24" stroke="#2a2a2a" stroke-width="1"/><rect x="1" y="2" width="1" height="1" fill="#2a2a2a"/><rect x="1" y="5" width="1" height="1" fill="#2a2a2a"/><rect x="1" y="8" width="1" height="1" fill="#2a2a2a"/><rect x="1" y="11" width="1" height="1" fill="#2a2a2a"/><rect x="1" y="14" width="1" height="1" fill="#2a2a2a"/><rect x="1" y="17" width="1" height="1" fill="#2a2a2a"/><rect x="3" y="22" width="1" height="1" fill="#2a2a2a"/><rect x="6" y="22" width="1" height="1" fill="#2a2a2a"/><rect x="9" y="22" width="1" height="1" fill="#2a2a2a"/><rect x="12" y="22" width="1" height="1" fill="#2a2a2a"/><rect x="15" y="22" width="1" height="1" fill="#2a2a2a"/><rect x="18" y="22" width="1" height="1" fill="#2a2a2a"/><rect x="21" y="22" width="1" height="1" fill="#2a2a2a"/></svg>
<svg style="position:absolute;left:514px;top:264px" width="24" height="24" viewBox="0 0 24 24"><defs><linearGradient id="fi8" x1="0" y1="0" x2="1" y2="1"><stop offset="0.5" stop-color="#fff"/><stop offset="1" stop-color="#d0d0d0"/></linearGradient></defs><rect x="0.5" y="0.5" width="23" height="23" fill="url(#fi8)" stroke="#5a5a5a"/><path d="M1 21 C1.8 15 4.5 15 5.5 21 C6.2 7 9.3 7 10 21 C10.6 -3 13.4 -3 14 21 C14.7 7 17.8 7 18.5 21 C19.5 15 22.2 15 23 21" fill="none" stroke="#1d5fb8" stroke-width="1.3"/><path d="M1 21 C1.8 15 4.5 15 5.5 21 C6.2 7 9.3 7 10 21 C10.6 -3 13.4 -3 14 21 C14.7 7 17.8 7 18.5 21 C19.5 15 22.2 15 23 21" fill="none" stroke="#7fb8ea" stroke-width="0.5"/><path d="M0.5 0 V24 M0 23.5 H24" stroke="#2a2a2a" stroke-width="1"/><rect x="1" y="2" width="1" height="1" fill="#2a2a2a"/><rect x="1" y="5" width="1" height="1" fill="#2a2a2a"/><rect x="1" y="8" width="1" height="1" fill="#2a2a2a"/><rect x="1" y="11" width="1" height="1" fill="#2a2a2a"/><rect x="1" y="14" width="1" height="1" fill="#2a2a2a"/><rect x="1" y="17" width="1" height="1" fill="#2a2a2a"/><rect x="3" y="22" width="1" height="1" fill="#2a2a2a"/><rect x="6" y="22" width="1" height="1" fill="#2a2a2a"/><rect x="9" y="22" width="1" height="1" fill="#2a2a2a"/><rect x="12" y="22" width="1" height="1" fill="#2a2a2a"/><rect x="15" y="22" width="1" height="1" fill="#2a2a2a"/><rect x="18" y="22" width="1" height="1" fill="#2a2a2a"/><rect x="21" y="22" width="1" height="1" fill="#2a2a2a"/></svg>
<svg style="position:absolute;left:582px;top:264px" width="24" height="24" viewBox="0 0 24 24"><defs><linearGradient id="fi9" x1="0" y1="0" x2="1" y2="1"><stop offset="0.5" stop-color="#fff"/><stop offset="1" stop-color="#d0d0d0"/></linearGradient></defs><rect x="0.5" y="0.5" width="23" height="23" fill="url(#fi9)" stroke="#5a5a5a"/><path d="M1.3 20.3 L4.1 15.1 L6.3 19.7 L8.3 9.2 L10.3 21 L12.2 3.1 L14.4 20.3 L16.2 9.4 L18.3 19.9 L20.3 15.1 L22.8 20" fill="none" stroke="#1f6fc5" stroke-width="1.1"/><path d="M0.5 0 V24 M0 23.5 H24" stroke="#2a2a2a" stroke-width="1"/><rect x="1" y="2" width="1" height="1" fill="#2a2a2a"/><rect x="1" y="5" width="1" height="1" fill="#2a2a2a"/><rect x="1" y="8" width="1" height="1" fill="#2a2a2a"/><rect x="1" y="11" width="1" height="1" fill="#2a2a2a"/><rect x="1" y="14" width="1" height="1" fill="#2a2a2a"/><rect x="1" y="17" width="1" height="1" fill="#2a2a2a"/><rect x="3" y="22" width="1" height="1" fill="#2a2a2a"/><rect x="6" y="22" width="1" height="1" fill="#2a2a2a"/><rect x="9" y="22" width="1" height="1" fill="#2a2a2a"/><rect x="12" y="22" width="1" height="1" fill="#2a2a2a"/><rect x="15" y="22" width="1" height="1" fill="#2a2a2a"/><rect x="18" y="22" width="1" height="1" fill="#2a2a2a"/><rect x="21" y="22" width="1" height="1" fill="#2a2a2a"/></svg>
<div class="t" style="left:121px;width:400px;text-align:center;top:120.97px;font-size:11.5px;color:#333;letter-spacing:0.22px;">Real and</div>
<div class="t" style="left:121px;width:400px;text-align:center;top:135.97px;font-size:11.5px;color:#333;letter-spacing:0.22px;">Imaginary</div>
<div class="t" style="left:189px;width:400px;text-align:center;top:120.97px;font-size:11.5px;color:#333;letter-spacing:0.22px;">Magnitude</div>
<div class="t" style="left:189px;width:400px;text-align:center;top:135.97px;font-size:11.5px;color:#333;letter-spacing:0.22px;">and Phase</div>
<div class="t" style="left:257.5px;width:400px;text-align:center;top:120.97px;font-size:11.5px;color:#333;letter-spacing:0.22px;">Spectrum</div>
<div class="t" style="left:325.5px;width:400px;text-align:center;top:120.97px;font-size:11.5px;color:#333;letter-spacing:0.22px;">Persistence</div>
<div class="t" style="left:325.5px;width:400px;text-align:center;top:135.97px;font-size:11.5px;color:#333;letter-spacing:0.22px;">Spectrum</div>
<div class="t" style="left:393.5px;width:400px;text-align:center;top:120.97px;font-size:11.5px;color:#333;letter-spacing:0.22px;">Spectrog...</div>
<div class="t" style="left:461.5px;width:400px;text-align:center;top:120.97px;font-size:11.5px;color:#333;letter-spacing:0.22px;">Matched</div>
<div class="t" style="left:461.5px;width:400px;text-align:center;top:135.97px;font-size:11.5px;color:#333;letter-spacing:0.22px;">Filter res...</div>
<div class="t" style="left:121px;width:400px;text-align:center;top:193.27px;font-size:11.5px;color:#333;letter-spacing:0.22px;">Stretch</div>
<div class="t" style="left:121px;width:400px;text-align:center;top:208.27px;font-size:11.5px;color:#333;letter-spacing:0.22px;">Processor...</div>
<div class="t" style="left:122.5px;width:400px;text-align:center;top:295.97px;font-size:11.5px;color:#333;letter-spacing:0.22px;">Contour</div>
<div class="t" style="left:189.5px;width:400px;text-align:center;top:295.97px;font-size:11.5px;color:#333;letter-spacing:0.22px;">Surface</div>
<div class="t" style="left:258px;width:400px;text-align:center;top:295.97px;font-size:11.5px;color:#333;letter-spacing:0.22px;">Delay Cut</div>
<div class="t" style="left:325.5px;width:400px;text-align:center;top:295.97px;font-size:11.5px;color:#333;letter-spacing:0.22px;">Doppler</div>
<div class="t" style="left:325.5px;width:400px;text-align:center;top:310.97px;font-size:11.5px;color:#333;letter-spacing:0.22px;">Cut</div>
<div class="t" style="left:394px;width:400px;text-align:center;top:295.97px;font-size:11.5px;color:#333;letter-spacing:0.22px;">Autocorr...</div>
<svg style="position:absolute;left:11px;top:36px" width="25" height="25" viewBox="0 0 25 25"><defs><linearGradient id="yp" x1="0" y1="0" x2="0.3" y2="1"><stop offset="0" stop-color="#fffbe0"/><stop offset="0.5" stop-color="#f8e27a"/><stop offset="1" stop-color="#e8bd2a"/></linearGradient></defs><path d="M8.5 1.5 H15.5 V8.5 H22.5 V15.5 H15.5 V22.5 H8.5 V15.5 H1.5 V8.5 H8.5 Z" fill="url(#yp)" stroke="#a87a1e" stroke-width="1.2" stroke-linejoin="round"/></svg>
<svg style="position:absolute;left:49px;top:38px" width="26" height="20" viewBox="0 0 26 20"><defs><linearGradient id="fo" x1="0" y1="0" x2="0.4" y2="1"><stop offset="0" stop-color="#ffffff"/><stop offset="0.45" stop-color="#fdf6d8"/><stop offset="1" stop-color="#f0d270"/></linearGradient></defs><path d="M1.5 1.5 H9 L11 3.5 H23.5 V18.5 H5 Z" fill="#f3dc8a" stroke="#a57c2c" stroke-width="1"/><path d="M1.5 1.5 H9 L11 3.5 H22.5 L23.5 4.5 V18.5 H5 L1.5 3 Z" fill="url(#fo)" stroke="#a57c2c" stroke-width="1.1" stroke-linejoin="round"/><path d="M11 6.5 H23" stroke="#b8862a" stroke-width="1"/><path d="M21.5 7 V18" stroke="#c9a24a" stroke-width="1.2"/></svg>
<svg style="position:absolute;left:90px;top:36px" width="24" height="24" viewBox="0 0 24 24"><defs><linearGradient id="fl" x1="0" y1="0" x2="1" y2="0"><stop offset="0" stop-color="#9a9a9a"/><stop offset="0.5" stop-color="#6a6a6a"/><stop offset="1" stop-color="#3a3a3a"/></linearGradient></defs><path d="M1 1 H23.3 V23 H3 L1 21 Z" fill="url(#fl)"/><rect x="4.7" y="1.6" width="14.6" height="9.4" fill="#ffffff" stroke="#9a9a9a" stroke-width="0.6"/><path d="M6.4 4.4 H17 M6.4 6.4 H12.5" stroke="#555" stroke-width="0.9"/><rect x="5" y="14.6" width="12" height="8" fill="#ffffff"/><rect x="11" y="15.5" width="5.5" height="6.5" fill="#e2e2e2"/><rect x="7" y="15.5" width="1.8" height="7" fill="#222"/><rect x="20" y="2" width="1.5" height="20" fill="#8a8a8a" opacity="0.6"/></svg>
<svg style="position:absolute;left:148px;top:36px" width="25" height="25" viewBox="0 0 25 25"><defs><linearGradient id="gp" x1="0" y1="0" x2="0.3" y2="1"><stop offset="0" stop-color="#fbfff2"/><stop offset="0.4" stop-color="#c4ea8c"/><stop offset="1" stop-color="#78c04a"/></linearGradient></defs><path d="M8.5 1.5 H15.5 V8.5 H22.5 V15.5 H15.5 V22.5 H8.5 V15.5 H1.5 V8.5 H8.5 Z" fill="url(#gp)" stroke="#2d7a1c" stroke-width="1.2" stroke-linejoin="round"/></svg>
<svg style="position:absolute;left:198px;top:41px" width="18" height="18" viewBox="0 0 18 18"><defs><linearGradient id="tr" x1="0" y1="0" x2="1" y2="0"><stop offset="0" stop-color="#7a7a7a"/><stop offset="0.35" stop-color="#f6f6f6"/><stop offset="1" stop-color="#6a6a6a"/></linearGradient></defs><path d="M1.5 5.5 Q2 1.5 8.5 1.2 Q15 1.5 15.5 5.5 Z" fill="url(#tr)" stroke="#5a5a5a" stroke-width="0.9"/><path d="M2.5 6 L3 16 Q8.5 17.3 14 16 L14.5 6 Z" fill="url(#tr)" stroke="#5a5a5a" stroke-width="0.9"/><path d="M5.5 7.5 V15 M7.5 7.5 V15.5 M9.5 7.5 V15.5 M11.5 7.5 V15" stroke="#6a6a6a" stroke-width="0.7"/></svg>
<svg style="position:absolute;left:200px;top:72px" width="15" height="17" viewBox="0 0 15 17"><path d="M1.5 1.5 H7 L9 3.5 V11.5 H1.5 Z" fill="#f6f6f6" stroke="#777" stroke-width="1"/><path d="M3 4.5 H7 M3 6.5 H7 M3 8.5 H7" stroke="#999" stroke-width="0.8"/><path d="M5.5 6.5 H11 L13.5 9 V15.5 H5.5 Z" fill="#f6f6f6" stroke="#777" stroke-width="1"/><path d="M7 9.5 H12 M7 11.5 H12 M7 13.5 H12" stroke="#999" stroke-width="0.8"/></svg>
<svg style="position:absolute;left:872px;top:5px" width="18" height="18" viewBox="0 0 18 18"><path d="M1.5 1.5 H16.5 V16.5 H3.5 L1.5 14.5 Z" fill="#96aabb" stroke="#7b8ea0"/><rect x="3.5" y="1.5" width="11" height="5.5" fill="#b4c5d4" stroke="#7b8ea0" stroke-width="0.6"/><path d="M5 3.3 H13 M5 5.2 H11" stroke="#7b8ea0" stroke-width="0.8"/><rect x="5" y="11" width="7.5" height="5.5" fill="#b4c5d4"/><rect x="6" y="12" width="2" height="4.5" fill="#7b8ea0"/></svg>
<svg style="position:absolute;left:898px;top:4px" width="13" height="19" viewBox="0 0 13 19"><path d="M6.5 1.5 L7 11.5 M10.2 3 L6 12" stroke="#7b8ea0" stroke-width="1"/><ellipse cx="4" cy="14.5" rx="2" ry="2.6" fill="none" stroke="#7b8ea0" stroke-width="1.1"/><ellipse cx="9" cy="14.8" rx="2" ry="2.8" fill="none" stroke="#7b8ea0" stroke-width="1.1"/></svg>
<svg style="position:absolute;left:922px;top:6px" width="16" height="16" viewBox="0 0 16 16"><path d="M1.5 1.5 H6 L8.5 4 V10.5 H1.5 Z" fill="#b4c5d4" stroke="#7b8ea0"/><path d="M3 4.5 H4 M3 7 H7 M3 8.8 H7" stroke="#7b8ea0" stroke-width="0.9"/><path d="M6.5 5.5 H11 L13.5 8 V14.5 H6.5 Z" fill="#b4c5d4" stroke="#7b8ea0"/><path d="M8 8.5 H9 M8 11 H12 M8 12.8 H12" stroke="#7b8ea0" stroke-width="0.9"/></svg>
<svg style="position:absolute;left:946px;top:5px" width="17" height="18" viewBox="0 0 17 18"><rect x="1.5" y="3.5" width="10.5" height="11" fill="#96aabb" stroke="#7b8ea0"/><rect x="4" y="1.5" width="5.5" height="3" fill="#b4c5d4" stroke="#7b8ea0"/><path d="M6.5 7.5 H12 L14.5 10 V16.5 H6.5 Z" fill="#b4c5d4" stroke="#7b8ea0"/><path d="M8 11.5 H13 M8 13.5 H13" stroke="#7b8ea0" stroke-width="0.9"/></svg>
<svg style="position:absolute;left:968px;top:6px" width="18" height="16" viewBox="0 0 18 16"><path d="M1.3 6 L6.6 1.3 V4.5 H12 A4.85 4.85 0 0 1 12 14.2 H8.2 V11 H12 A1.75 1.75 0 0 0 12 7.5 H6.6 V10.8 Z" fill="#b4c5d4" stroke="#7b8ea0" stroke-width="0.9" stroke-linejoin="round"/></svg>
<svg style="position:absolute;left:991px;top:6px" width="18" height="16" viewBox="0 0 18 16"><g transform="translate(18.5,0) scale(-1,1)"><path d="M1.3 6 L6.6 1.3 V4.5 H12 A4.85 4.85 0 0 1 12 14.2 H8.2 V11 H12 A1.75 1.75 0 0 0 12 7.5 H6.6 V10.8 Z" fill="#b4c5d4" stroke="#7b8ea0" stroke-width="0.9" stroke-linejoin="round"/></g></svg>
<svg style="position:absolute;left:1016px;top:5px" width="18" height="18" viewBox="0 0 18 18"><rect x="1.5" y="1.5" width="10" height="15" fill="#f0f0f0" stroke="#7a7a7a"/><rect x="4" y="4.5" width="12.5" height="9.5" fill="#e8e8e8" stroke="#6a6a6a"/><rect x="4.5" y="5" width="11.5" height="2" fill="#5b9bd5"/></svg>
<svg style="position:absolute;left:1040px;top:5px" width="18" height="18" viewBox="0 0 18 18"><defs><radialGradient id="hp" cx="0.35" cy="0.3" r="0.8"><stop offset="0" stop-color="#ffffff"/><stop offset="1" stop-color="#b8c6d6"/></radialGradient></defs><circle cx="9" cy="9" r="7.6" fill="url(#hp)" stroke="#1c2f58" stroke-width="1.2"/><path d="M6.3 6.8 Q6.3 4 9 4 Q11.8 4 11.8 6.5 Q11.8 8 10 9 Q9 9.6 9 11" fill="none" stroke="#1c3a6a" stroke-width="1.9"/><rect x="8" y="12.3" width="2" height="2" fill="#1c3a6a"/></svg>
<svg style="position:absolute;left:1066px;top:7px" width="14" height="14" viewBox="0 0 14 14"><circle cx="7" cy="7" r="5.6" fill="none" stroke="#6e6e6e" stroke-width="1.2"/><path d="M3.3 4.8 H10.7 L7 10 Z" fill="#6e6e6e"/></svg>
<div style="position:absolute;left:1px;top:731px;width:1084px;height:1px;background:#ffffff"></div>
<div style="position:absolute;left:1081px;top:720px;width:2px;height:2px;background:#a59d85"></div>
<div style="position:absolute;left:1077px;top:724px;width:2px;height:2px;background:#a59d85"></div>
<div style="position:absolute;left:1081px;top:724px;width:2px;height:2px;background:#a59d85"></div>
<div style="position:absolute;left:1073px;top:728px;width:2px;height:2px;background:#a59d85"></div>
<div style="position:absolute;left:1077px;top:728px;width:2px;height:2px;background:#a59d85"></div>
<div style="position:absolute;left:1081px;top:728px;width:2px;height:2px;background:#a59d85"></div>
<div style="position:absolute;left:116px;top:27px;width:969px;height:1px;background:#f4f4f4"></div>
</body></html>
